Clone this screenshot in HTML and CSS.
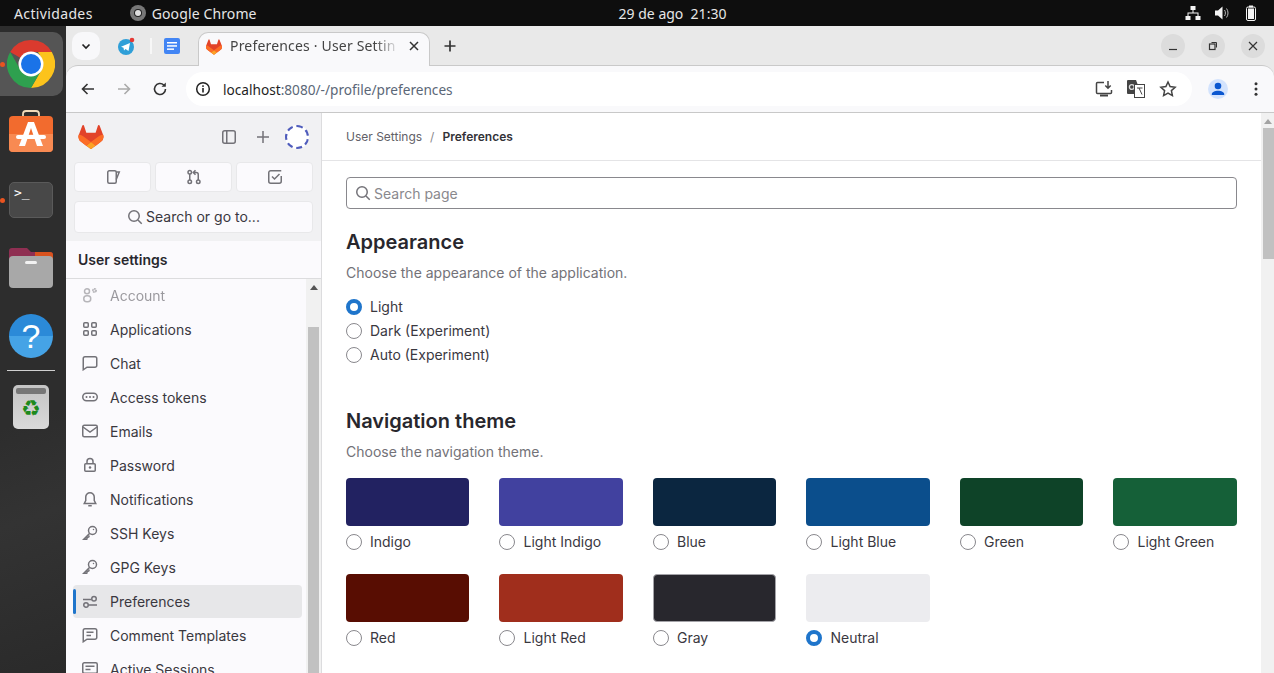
FILE: index.html
```html
<!DOCTYPE html>
<html lang="es">
<head>
<meta charset="utf-8">
<title>Preferences · User Settings</title>
<link rel="stylesheet" href="styles.css">
</head>
<body>
<header class="topbar">
  <div class="top-left">
    <span class="top-text">Actividades</span>
    <span class="top-app">
      <svg class="i16" viewBox="0 0 16 16"><circle cx="8" cy="8" r="8" fill="#777"/><circle cx="8" cy="8" r="4" fill="#222"/><circle cx="8" cy="8" r="3" fill="#ddd"/></svg>
      <span class="top-name">Google Chrome</span>
    </span>
  </div>
  <div class="top-clock">29 de ago&nbsp; 21:30</div>
  <div class="top-right">
    <svg class="i16" viewBox="0 0 16 16" fill="#f4f4f4"><rect x="5.5" y="1" width="5" height="4"/><rect x=".5" y="11" width="5" height="4"/><rect x="10.500" y="11" width="5" height="4"/><path d="M7.500 5h1v2.500H13.500V11h-1V8.500h-9V11h-1V7.500h5z"/></svg>
    <svg class="i16" viewBox="0 0 16 16" fill="#f4f4f4"><path d="M1 5.500h3L8.500 1.500v13L4 10.500H1z"/><path d="M10.500 5c1.200 1.700 1.200 4.300 0 6M12.500 3.500c2 2.500 2 6.500 0 9" fill="none" stroke="#bbb"/></svg>
    <svg class="i16" viewBox="0 0 16 16"><rect x="6" y=".5" width="4" height="2" fill="#f4f4f4"/><rect x="3.500" y="2" width="9" height="13.500" rx="1.500" fill="none" stroke="#f4f4f4"/><rect x="5" y="3.500" width="6" height="10.500" fill="#f4f4f4"/></svg>
  </div>
</header>

<div class="desktop">
  <nav class="dock">
    <div class="dock-item dock-active">
      <span class="dock-dot"></span>
      <svg class="chrome-logo" viewBox="0 0 48 48">
        <path d="M24 0A24 24 0 0 1 44.800 12H24A12 12 0 0 0 13.600 18L3.200 12A24 24 0 0 1 24 0Z" fill="#db3a2e"/>
        <path d="M44.800 12A24 24 0 0 1 24 48L34.400 30A12 12 0 0 0 34.400 18L31 12Z" fill="#fcc31c"/>
        <path d="M3.200 12A24 24 0 0 0 24 48L34.400 30H24A12 12 0 0 1 13.600 30Z" fill="#2ea04f"/>
        <circle cx="24" cy="24" r="12.500" fill="#fff"/><circle cx="24" cy="24" r="10" fill="#1a73e8"/>
      </svg>
    </div>
    <div class="dock-item">
      <svg class="dock-svg" viewBox="0 0 44 44">
        <path d="M14 7V4a3 3 0 0 1 3-3h10a3 3 0 0 1 3 3v3" fill="none" stroke="#f0d9b8" stroke-width="1.800"/>
        <rect y="6" width="44" height="36" rx="4" fill="#f26b2e"/><path d="M0 24h44v14a4 4 0 0 1-4 4H4a4 4 0 0 1-4-4z" fill="#f88a52"/>
        <path d="M19 12h6l9 24h-6l-6-18-6 18h-6z" fill="#fff"/><rect x="7" y="25" width="30" height="4" rx="2" fill="#fff"/>
      </svg>
    </div>
    <div class="dock-item">
      <span class="dock-dot"></span>
      <div class="terminal">&gt;_</div>
    </div>
    <div class="dock-item">
      <svg class="dock-svg" viewBox="0 0 44 44">
        <path d="M0 5a3 3 0 0 1 3-3h15l4 4h19a3 3 0 0 1 3 3v10H0z" fill="#8f2f52"/><path d="M26 6h15a3 3 0 0 1 3 3v10H26z" fill="#d9531e"/>
        <rect y="10" width="44" height="32" rx="4" fill="#a8a8a8"/><rect x="16" y="15" width="12" height="3" rx="1.500" fill="#f2f2f2"/>
      </svg>
    </div>
    <div class="dock-item">
      <div class="help">?</div>
    </div>
    <div class="dock-sep"></div>
    <div class="trash"><span class="trash-lid"></span><span class="trash-glyph">♻</span></div>
  </nav>

  <div class="browser">
    <div class="tabstrip">
      <button class="tab-menu">
        <svg class="i12" viewBox="0 0 12 12"><path d="M2.500 4.500 6 8l3.500-3.500" fill="none" stroke="#222" stroke-width="1.700"/></svg>
      </button>
      <span class="pinned telegram">
        <svg class="i20" viewBox="0 0 20 20"><circle cx="9" cy="11" r="8" fill="#2f9fd8"/><path d="M4 10.800 13 7l-1.500 8-3-2-1.500 1.500-.5-2.700z" fill="#fff"/><circle cx="15" cy="4" r="2.300" fill="#e53935"/></svg>
      </span>
      <span class="pin-sep"></span>
      <span class="pinned docs">
        <svg class="i16" viewBox="0 0 16 16"><rect width="16" height="16" rx="2" fill="#4285f4"/><rect x="3" y="4" width="10" height="1.500" fill="#fff"/><rect x="3" y="7.200" width="10" height="1.500" fill="#fff"/><rect x="3" y="10.400" width="7" height="1.500" fill="#fff"/></svg>
      </span>
      <div class="tab">
        <svg class="i16 tab-icon" viewBox="0 0 25 24"><path d="m24.507 9.500-.034-.09L21.082.562a.896.896 0 0 0-1.694.091l-2.290 7.010H7.825L5.535.653a.898.898 0 0 0-1.694-.09L.451 9.411.416 9.500a6.297 6.297 0 0 0 2.090 7.278l.012.01.03.022 5.160 3.867 2.560 1.935 1.554 1.176a1.051 1.051 0 0 0 1.268 0l1.555-1.176 2.560-1.935 5.197-3.890.014-.01A6.297 6.297 0 0 0 24.507 9.500Z" fill="#E24329"/><path d="m24.507 9.500-.034-.09a11.440 11.440 0 0 0-4.560 2.051l-7.447 5.632 4.742 3.584 5.197-3.890.014-.01A6.297 6.297 0 0 0 24.507 9.500Z" fill="#FC6D26"/><path d="m7.707 20.677 2.560 1.935 1.555 1.176a1.051 1.051 0 0 0 1.268 0l1.555-1.176 2.560-1.935-4.743-3.584-4.755 3.584Z" fill="#FCA326"/><path d="M5.010 11.461a11.430 11.430 0 0 0-4.560-2.050L.416 9.500a6.297 6.297 0 0 0 2.090 7.278l.012.01.03.022 5.160 3.867 4.745-3.584-7.444-5.632Z" fill="#FC6D26"/></svg>
        <span class="tab-title">Preferences · User Settin</span>
        <svg class="i12" viewBox="0 0 12 12"><path d="M2 2l8 8M10 2l-8 8" stroke="#333" stroke-width="1.500"/></svg>
      </div>
      <svg class="i16 new-tab" viewBox="0 0 16 16"><path d="M8 2.500v11M2.500 8h11" stroke="#333" stroke-width="1.700"/></svg>
      <div class="win-controls">
        <span class="win-btn"><svg class="i12" viewBox="0 0 12 12"><path d="M2 9.500h8" stroke="#333" stroke-width="1.200"/></svg></span>
        <span class="win-btn"><svg class="i12" viewBox="0 0 12 12"><rect x="2.500" y="4" width="5.500" height="5.500" fill="none" stroke="#333" stroke-width="1.200"/><path d="M4.500 2.500h5v5" fill="none" stroke="#333"/></svg></span>
        <span class="win-btn"><svg class="i12" viewBox="0 0 12 12"><path d="M2 2l8 8M10 2l-8 8" stroke="#333" stroke-width="1.200"/></svg></span>
      </div>
    </div>

    <div class="toolbar">
      <svg class="i16 tool" viewBox="0 0 16 16"><path d="M14 8H2.500M7.500 3l-5 5 5 5" fill="none" stroke="#333" stroke-width="1.600"/></svg>
      <svg class="i16 tool" viewBox="0 0 16 16"><path d="M2 8h11.500M8.500 3l5 5-5 5" fill="none" stroke="#aaa" stroke-width="1.600"/></svg>
      <svg class="i16 tool" viewBox="0 0 16 16"><path d="M13.500 8A5.500 5.500 0 1 1 11.800 4" fill="none" stroke="#333" stroke-width="1.600"/><path d="M13.800 1.500v4.300H9.500z" fill="#333"/></svg>
      <div class="omnibox">
        <svg class="i16" viewBox="0 0 16 16"><circle cx="8" cy="8" r="6.300" fill="none" stroke="#222" stroke-width="1.500"/><rect x="7.200" y="7" width="1.600" height="4.500" fill="#222"/><rect x="7.200" y="4.300" width="1.600" height="1.600" fill="#222"/></svg>
        <span class="url"><span class="url-host">localhost</span>:8080/-/profile/preferences</span>
        <span class="omni-actions">
          <svg class="i18" viewBox="0 0 18 18"><path d="M9 2.500H2.500a1 1 0 0 0-1 1v9a1 1 0 0 0 1 1h13a1 1 0 0 0 1-1V10" fill="none" stroke="#444" stroke-width="1.500"/><path d="M5 15.500h8" stroke="#444" stroke-width="2"/><path d="M13 1v7M10.300 5.500 13 8.200l2.700-2.700" fill="none" stroke="#444" stroke-width="1.500"/></svg>
          <svg class="i18" viewBox="0 0 18 18"><path d="M0 1a1 1 0 0 1 1-1h8l1.500 4v10H1a1 1 0 0 1-1-1z" fill="#444"/><circle cx="4.800" cy="7" r="2.400" fill="none" stroke="#ddd" stroke-width="1.300"/><rect x="7.500" y="4.500" width="10" height="13" fill="#fff" stroke="#444"/><path d="M10 8h5.500M12 8l3 6.500" stroke="#444" fill="none"/></svg>
          <svg class="i18" viewBox="0 0 18 18"><path d="M9 2l2.100 4.600 5 .6-3.700 3.400 1 5L9 13.100 4.600 15.600l1-5L1.900 7.200l5-.6z" fill="none" stroke="#444" stroke-width="1.500"/></svg>
        </span>
      </div>
      <span class="profile"><svg class="i16" viewBox="0 0 16 16"><circle cx="8" cy="5" r="3.300" fill="#0b57d0"/><path d="M1.800 14v-1c0-2 3-3.300 6.200-3.300s6.200 1.300 6.200 3.300v1z" fill="#0b57d0"/></svg></span>
      <svg class="i16 kebab" viewBox="0 0 16 16" fill="#333"><circle cx="8" cy="2.800" r="1.500"/><circle cx="8" cy="8" r="1.500"/><circle cx="8" cy="13.200" r="1.500"/></svg>
    </div>

    <div class="page">
      <aside class="sidebar">
        <div class="side-top">
          <div class="side-head">
            <svg class="logo" viewBox="0 0 25 24"><path d="m24.507 9.500-.034-.09L21.082.562a.896.896 0 0 0-1.694.091l-2.290 7.010H7.825L5.535.653a.898.898 0 0 0-1.694-.09L.451 9.411.416 9.500a6.297 6.297 0 0 0 2.090 7.278l.012.01.03.022 5.160 3.867 2.560 1.935 1.554 1.176a1.051 1.051 0 0 0 1.268 0l1.555-1.176 2.560-1.935 5.197-3.890.014-.01A6.297 6.297 0 0 0 24.507 9.500Z" fill="#E24329"/><path d="m24.507 9.500-.034-.09a11.440 11.440 0 0 0-4.560 2.051l-7.447 5.632 4.742 3.584 5.197-3.890.014-.01A6.297 6.297 0 0 0 24.507 9.500Z" fill="#FC6D26"/><path d="m7.707 20.677 2.560 1.935 1.555 1.176a1.051 1.051 0 0 0 1.268 0l1.555-1.176 2.560-1.935-4.743-3.584-4.755 3.584Z" fill="#FCA326"/><path d="M5.010 11.461a11.430 11.430 0 0 0-4.560-2.050L.416 9.500a6.297 6.297 0 0 0 2.090 7.278l.012.01.03.022 5.160 3.867 4.745-3.584-7.444-5.632Z" fill="#FC6D26"/></svg>
            <span class="head-actions">
              <svg class="i16 ico" viewBox="0 0 16 16"><rect x="1.750" y="1.750" width="12.500" height="12.500" rx="2"/><path d="M5.750 1.750v12.500"/></svg>
              <svg class="i16 ico" viewBox="0 0 16 16"><path d="M8 2v12M2 8h12"/></svg>
              <span class="avatar"></span>
            </span>
          </div>
          <div class="quick">
            <button class="qbtn"><svg class="i16 ico" viewBox="0 0 16 16"><rect x="2.750" y="1.750" width="8.500" height="12.500" rx="1.500"/><path d="M11.250 3h3l-3 7.500"/></svg></button>
            <button class="qbtn"><svg class="i16 ico" viewBox="0 0 16 16"><circle cx="3.750" cy="3.250" r="1.750"/><circle cx="3.750" cy="12.750" r="1.750"/><circle cx="12.250" cy="12.750" r="1.750"/><path d="M3.750 5v6M12.250 11V5.500a2 2 0 0 0-2-2H7.500M9.500 1.250 7.250 3.500 9.500 5.750"/></svg></button>
            <button class="qbtn"><svg class="i16 ico" viewBox="0 0 16 16"><path d="M14.250 7v5.250a2 2 0 0 1-2 2h-8.500a2 2 0 0 1-2-2v-8.500a2 2 0 0 1 2-2h10.500"/><path d="M5 7.500l2.500 2.500 5-5"/></svg></button>
          </div>
          <button class="side-search">
            <svg class="i16 ico" viewBox="0 0 16 16"><circle cx="7" cy="7" r="5.250"/><path d="M11 11l3.750 3.750"/></svg>
            <span>Search or go to...</span>
          </button>
        </div>
        <h2 class="side-title">User settings</h2>
        <div class="side-body">
          <ul class="nav-list">
            <li class="nav-item faded"><svg class="i16 ico" viewBox="0 0 16 16"><circle cx="5" cy="4.250" r="2.500"/><rect x="1.750" y="8.750" width="7" height="6" rx="3"/><circle cx="12.500" cy="3.500" r="1.500" stroke-dasharray="1.500 .5" stroke-width="2"/></svg>Account</li>
            <li class="nav-item"><svg class="i16 ico" viewBox="0 0 16 16"><rect x="1.750" y="1.750" width="4.500" height="4.500" rx="1"/><rect x="9.750" y="1.750" width="4.500" height="4.500" rx="1"/><rect x="1.750" y="9.750" width="4.500" height="4.500" rx="1"/><rect x="9.750" y="9.750" width="4.500" height="4.500" rx="1"/></svg>Applications</li>
            <li class="nav-item"><svg class="i16 ico" viewBox="0 0 16 16"><path d="M3 1.750h10A1.750 1.750 0 0 1 14.750 3.500v7A1.750 1.750 0 0 1 13 12.250H5L1.250 14.750V3.500A1.750 1.750 0 0 1 3 1.750z"/></svg>Chat</li>
            <li class="nav-item"><svg class="i16 ico" viewBox="0 0 16 16"><rect x=".75" y="4.250" width="14.500" height="7.500" rx="3.750"/><path d="M4.500 8h.01M8 8h.01M11.500 8h.01" stroke-width="2" stroke-linecap="round"/></svg>Access tokens</li>
            <li class="nav-item"><svg class="i16 ico" viewBox="0 0 16 16"><rect x=".75" y="2.250" width="14.500" height="11.500" rx="1.500"/><path d="M1 4l7 5 7-5"/></svg>Emails</li>
            <li class="nav-item"><svg class="i16 ico" viewBox="0 0 16 16"><rect x="2.750" y="6.750" width="10.500" height="7.500" rx="1"/><path d="M5 6.750V4.500a3 3 0 0 1 6 0v2.250"/><path d="M8 10.500h.01" stroke-width="2.500" stroke-linecap="round"/></svg>Password</li>
            <li class="nav-item"><svg class="i16 ico" viewBox="0 0 16 16"><path d="M8 1.750A4.250 4.250 0 0 0 3.750 6v3.500l-1.500 3h11.500l-1.500-3V6A4.250 4.250 0 0 0 8 1.750z"/><path d="M6.250 14.750h3.500"/></svg>Notifications</li>
            <li class="nav-item"><svg class="i16 ico" viewBox="0 0 16 16"><circle cx="10.500" cy="5.500" r="4"/><path d="M7.500 8.500 1.750 14.250h3l.5-1.750 1.500-.5.5-1.500"/><path d="M11.500 4.500h.01" stroke-width="1.500" stroke-linecap="round"/></svg>SSH Keys</li>
            <li class="nav-item"><svg class="i16 ico" viewBox="0 0 16 16"><circle cx="10.500" cy="5.500" r="4"/><path d="M7.500 8.500 1.750 14.250h3l.5-1.750 1.500-.5.5-1.500"/><path d="M11.500 4.500h.01" stroke-width="1.500" stroke-linecap="round"/></svg>GPG Keys</li>
            <li class="nav-item nav-current"><svg class="i16 ico" viewBox="0 0 16 16"><path d="M1 5.500h8.500M6.500 11H15"/><circle cx="12" cy="4.750" r="2.250"/><circle cx="4" cy="11" r="2.250"/></svg>Preferences</li>
            <li class="nav-item"><svg class="i16 ico" viewBox="0 0 16 16"><path d="M3 1.750h10A1.750 1.750 0 0 1 14.750 3.500v7A1.750 1.750 0 0 1 13 12.250H5L1.250 14.750V3.500A1.750 1.750 0 0 1 3 1.750z"/><path d="M4.500 5.250h7M4.500 8.500h4.500"/></svg>Comment Templates</li>
            <li class="nav-item"><svg class="i16 ico" viewBox="0 0 16 16"><rect x=".75" y="1.750" width="14.500" height="10.500" rx="1.500"/><path d="M3.500 5.250h9M3.500 8.500h5"/></svg>Active Sessions</li>
          </ul>
          <div class="side-scroll">
            <span class="sb-arrow"></span>
            <span class="side-thumb"></span>
          </div>
        </div>
      </aside>

      <main class="content">
        <div class="crumbs"><span>User Settings</span><span class="crumb-sep">/</span><strong>Preferences</strong></div>
        <div class="body-pad">
          <div class="page-search">
            <svg class="i16 ico" viewBox="0 0 16 16"><circle cx="7" cy="7" r="5.250"/><path d="M11 11l3.750 3.750"/></svg>
            <span>Search page</span>
          </div>
          <section class="sec-appearance">
            <h3 class="sec-title">Appearance</h3>
            <p class="sec-sub">Choose the appearance of the application.</p>
            <div class="radio-col">
              <label class="radio"><input type="radio" name="mode" checked>Light</label>
              <label class="radio"><input type="radio" name="mode">Dark (Experiment)</label>
              <label class="radio"><input type="radio" name="mode">Auto (Experiment)</label>
            </div>
          </section>
          <section class="sec-theme">
            <h3 class="sec-title">Navigation theme</h3>
            <p class="sec-sub">Choose the navigation theme.</p>
            <div class="themes">
              <div class="theme"><div class="swatch sw-indigo"></div><label class="radio"><input type="radio" name="t">Indigo</label></div>
              <div class="theme"><div class="swatch sw-lindigo"></div><label class="radio"><input type="radio" name="t">Light Indigo</label></div>
              <div class="theme"><div class="swatch sw-blue"></div><label class="radio"><input type="radio" name="t">Blue</label></div>
              <div class="theme"><div class="swatch sw-lblue"></div><label class="radio"><input type="radio" name="t">Light Blue</label></div>
              <div class="theme"><div class="swatch sw-green"></div><label class="radio"><input type="radio" name="t">Green</label></div>
              <div class="theme"><div class="swatch sw-lgreen"></div><label class="radio"><input type="radio" name="t">Light Green</label></div>
              <div class="theme"><div class="swatch sw-red"></div><label class="radio"><input type="radio" name="t">Red</label></div>
              <div class="theme"><div class="swatch sw-lred"></div><label class="radio"><input type="radio" name="t">Light Red</label></div>
              <div class="theme"><div class="swatch sw-gray"></div><label class="radio"><input type="radio" name="t">Gray</label></div>
              <div class="theme"><div class="swatch sw-neutral"></div><label class="radio"><input type="radio" name="t" checked>Neutral</label></div>
            </div>
          </section>
        </div>
      </main>

      <div class="page-scroll">
        <span class="sb-arrow"></span>
        <span class="page-thumb"></span>
      </div>
    </div>
  </div>
</div>
</body>
</html>
```

FILE: styles.css
```css
* { box-sizing: border-box; }
html, body { margin: 0; height: 673px; overflow: hidden; }
body { display: flex; flex-direction: column; font-family: Inter, "Noto Sans", sans-serif; font-size: 14px; color: #3a383f; background: #fff; }
button { font: inherit; color: inherit; }
ul { list-style: none; margin: 0; padding: 0; }
h2, h3, p { margin: 0; }

.i12 { width: 12px; height: 12px; flex: none; display: block; }
.i16 { width: 16px; height: 16px; flex: none; display: block; }
.i18 { width: 18px; height: 18px; flex: none; display: block; }
.i20 { width: 20px; height: 20px; flex: none; display: block; }
.ico { fill: none; stroke: #737278; stroke-width: 1.500; }

/* ubuntu top bar */
.topbar { height: 26px; flex: none; background: #0e0e0e; color: #e6e6e6; display: grid; grid-template-columns: 1fr auto 1fr; align-items: center; padding: 0 15px 0 14px; font-family: "Noto Sans", sans-serif; font-size: 14px; }
.top-left { display: flex; align-items: center; gap: 37px; }
.top-text { letter-spacing: .36px; }
.top-name { letter-spacing: .12px; }
.top-app { display: flex; align-items: center; gap: 6px; }
.top-clock { font-size: 14px; margin-left: 72px; }
.top-right { justify-self: end; display: flex; gap: 13px; }

/* dock */
.desktop { flex: 1; min-height: 0; display: flex; }
.dock { width: 66px; flex: none; background: linear-gradient(160deg, #2d2d2d 60%, #333 75%, #2a2a2a 100%); display: flex; flex-direction: column; align-items: stretch; padding-top: 4px; }
.dock-item { height: 68px; flex: none; display: flex; align-items: center; justify-content: center; position: relative; padding-right: 4px; }
.dock-active { background: #555; border-radius: 0 10px 10px 0; height: 64px; margin: 2px 3px 2px 0; padding-right: 1px; }
.dock-dot { position: absolute; left: 0; top: 50%; margin-top: -2.500px; width: 5px; height: 5px; border-radius: 50%; background: #e95420; }
.chrome-logo { width: 48px; height: 48px; display: block; }
.dock-svg { width: 44px; height: 44px; display: block; }
.terminal { width: 44px; height: 36px; border-radius: 5px; background: #484848; border: 1px solid #5a5a5a; color: #fff; font: 13px/16px "DejaVu Sans Mono", monospace; padding: 2px 4px; }
.help { width: 44px; height: 44px; border-radius: 50%; background: linear-gradient(#2b8ad8 50%, #45a3e6 50%); color: #fff; font: 34px/44px "Liberation Sans", sans-serif; text-align: center; }
.dock-sep { height: 1px; background: #cfcfcf; margin: 0 11px 0 7px; flex: none; }
.trash { width: 36px; height: 44px; margin: 14px 0 0 13px; background: linear-gradient(#c4c4c4, #dadada); border-radius: 5px; padding-top: 3px; display: flex; flex-direction: column; align-items: center; }
.trash-lid { width: 30px; height: 6px; border-radius: 2px; background: #777; flex: none; }
.trash-glyph { font: 22px/30px "DejaVu Sans", sans-serif; color: #1c8a1c; }

/* chrome */
.browser { flex: 1; min-width: 0; display: flex; flex-direction: column; background: #e9e9e9; }
.tabstrip { height: 40px; flex: none; display: flex; align-items: flex-start; padding: 6px 9px 0 6px; font-family: "Noto Sans", sans-serif; position: relative; z-index: 1; }
.tab-menu { width: 28px; height: 28px; border: 0; border-radius: 10px; background: #f8f8fa; display: flex; align-items: center; justify-content: center; padding: 0; }
.pinned { height: 28px; display: flex; align-items: center; margin-left: 16px; }
.telegram { margin-left: 17px; }
.pin-sep { width: 2px; height: 16px; background: #f7f7f7; margin: 6px 0 0 13px; }
.docs { margin-left: 12px; }
.tab { width: 232px; height: 34px; margin-left: 18px; background: #f9f9fb; border: 1px solid #c9c9c9; border-bottom: 0; border-radius: 10px 10px 0 0; display: flex; align-items: center; padding: 0 9px 8px 7px; gap: 8px; color: #444; }
.tab-icon { margin-top: 2px; }
.tab-title { flex: 1; min-width: 0; overflow: hidden; white-space: nowrap; letter-spacing: .18px; -webkit-mask-image: linear-gradient(90deg, #000 85%, transparent); mask-image: linear-gradient(90deg, #000 85%, transparent); }
.new-tab { margin: 6px 0 0 12px; }
.win-controls { margin-left: auto; display: flex; gap: 16px; }
.win-btn { width: 24px; height: 24px; border-radius: 50%; background: #dcdcdc; display: flex; align-items: center; justify-content: center; margin-top: 2px; }
.toolbar { height: 48px; flex: none; background: #f9f9fb; border-top: 1px solid #c9c9c9; border-bottom: 1px solid #c8c8c8; border-radius: 12px 12px 0 0; margin-top: -1px; display: flex; align-items: center; padding-left: 14px; font-family: "Noto Sans", sans-serif; gap: 20px; }
.omnibox { width: 1006px; height: 34px; margin-left: -2px; background: #fff; border-radius: 17px; display: flex; align-items: center; padding: 0 15px 0 9px; gap: 12px; }
.url { color: #5b6777; font-size: 13.650px; }
.url-host { color: #1f1f1f; }
.omni-actions { margin-left: auto; display: flex; gap: 14px; color: #444; }
.profile { width: 20px; height: 20px; border-radius: 50%; background: #d3e3fd; display: flex; align-items: center; justify-content: center; margin-left: -4px; }
.kebab { margin-left: 0; }

/* page */
.page { flex: 1; min-height: 0; display: flex; background: #fff; }

/* sidebar */
.sidebar { width: 256px; flex: none; display: flex; flex-direction: column; background: #fbfafd; border-right: 1px solid #dcdcde; min-height: 0; }
.side-top { background: #f1f1f3; padding: 8px 8px 8px; flex: none; height: 128px; }
.side-head { height: 32px; display: flex; align-items: center; justify-content: space-between; padding: 0 4px; }
.logo { width: 26px; height: 24px; display: block; }
.head-actions { display: flex; align-items: center; gap: 18px; }
.avatar { width: 24px; height: 24px; border-radius: 50%; border: 2px dashed #4f5cbc; background: #fff; margin-left: -4px; }
.quick { display: grid; grid-template-columns: repeat(3, 1fr); gap: 4px; margin-top: 9px; }
.qbtn { height: 30px; border: 1px solid #e8e8ea; border-radius: 4px; background: #fbfafd; display: flex; align-items: center; justify-content: center; padding: 0; }
.side-search { width: 100%; height: 32px; margin-top: 9px; border: 1px solid #e8e8ea; border-radius: 4px; background: #fbfafd; display: flex; align-items: center; justify-content: center; gap: 3px; padding: 0 0 1px; font-family: Inter, sans-serif; font-size: 14px; }
.side-title { height: 38px; flex: none; font-size: 14px; font-weight: 600; color: #28272d; line-height: 37px; padding-left: 12px; border-bottom: 1px solid #dcdcde; }
.side-body { flex: 1; min-height: 0; display: flex; overflow: hidden; }
.nav-list { flex: 1; min-width: 0; padding: 0 4px 0 7px; margin-top: -1px; }
.nav-item { height: 34px; display: flex; align-items: center; gap: 12px; padding-left: 9px; border-radius: 4px; position: relative; white-space: nowrap; }
.nav-item.faded { opacity: .5; }
.nav-current { background: #e7e7e9; height: 33px; margin-top: 1px; }
.nav-current::before { content: ""; position: absolute; left: 0; top: 4px; bottom: 4px; width: 3px; border-radius: 2px; background: #1f75cb; }
.side-scroll { width: 15px; flex: none; background: #f1f1f1; display: flex; flex-direction: column; align-items: center; }
.sb-arrow { flex: none; width: 0; height: 0; border: 4px solid transparent; border-top: 0; border-bottom: 5px solid #555; margin-top: 6px; }
.side-thumb { flex: 1; width: 11px; background: #c1c1c1; margin-top: 37px; }

/* content */
.content { flex: 1; min-width: 0; }
.crumbs { height: 48px; display: flex; align-items: center; padding-left: 24px; border-bottom: 1px solid #e4e4e6; font-size: 12px; color: #626168; gap: 8px; }
.crumbs strong { color: #333238; font-weight: 600; }
.crumb-sep { color: #89888d; }
.body-pad { padding: 16px 24px 0; }
.page-search { height: 32px; border: 1px solid #89888d; border-radius: 4px; display: flex; align-items: center; padding-left: 8px; gap: 3px; color: #89888d; }
.sec-title { font-size: 20px; font-weight: 600; line-height: 24px; color: #28272d; }
.sec-sub { color: #737278; line-height: 20px; margin-top: 9px; }
.sec-appearance { margin-top: 21px; }
.sec-theme { margin-top: 42px; }
.radio-col { display: flex; flex-direction: column; margin-top: 12px; }
.radio { height: 24px; display: flex; align-items: center; gap: 8px; color: #3a383f; line-height: 16px; }
.radio input { appearance: none; -webkit-appearance: none; width: 16px; height: 16px; margin: 0; flex: none; border: 1px solid #89888d; border-radius: 50%; background: #fff; }
.radio input:checked { border: 4.500px solid #1f75cb; }
.themes { display: grid; grid-template-columns: repeat(6, 1fr); gap: 12px 29.980px; margin-top: 16px; }
.theme { display: flex; flex-direction: column; gap: 4px; height: 84px; }
.swatch { height: 48px; width: calc(100% - .1px); border-radius: 4px; }
.theme .radio { height: 24px; }
.sw-indigo { background: #222261; }
.sw-lindigo { background: #41419f; }
.sw-blue { background: #0b2640; }
.sw-lblue { background: #0b4e8c; }
.sw-green { background: #0e4328; }
.sw-lgreen { background: #156038; }
.sw-red { background: #580d02; }
.sw-lred { background: #a02e1c; }
.sw-gray { background: #28272d; border: 1px solid #a4a3a8; }
.sw-neutral { background: #ececef; }

.page-scroll { width: 13px; flex: none; background: #f1f1f1; display: flex; flex-direction: column; align-items: flex-end; }
.page-scroll .sb-arrow { margin: 6px 2px 0 0; border-bottom-color: #a3a3a3; }
.page-thumb { width: 11px; height: 131px; margin-top: 4px; background: #c1c1c1; }
```
